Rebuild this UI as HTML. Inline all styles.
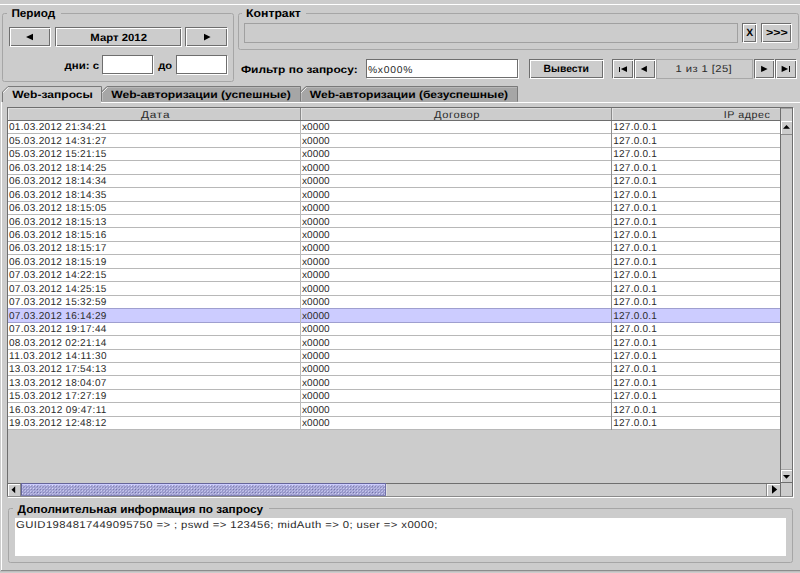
<!DOCTYPE html>
<html><head><meta charset="utf-8"><style>
html,body{margin:0;padding:0;background:#cccccc}
body{width:800px;height:573px;overflow:hidden;position:relative}
svg{position:absolute;left:0;top:0;font-family:"Liberation Sans",sans-serif}
text{text-rendering:geometricPrecision}
</style></head><body>
<svg width="800" height="573" viewBox="0 0 800 573" shape-rendering="crispEdges">
<rect width="800" height="573" fill="#cccccc"/>
<rect x="0" y="4" width="800" height="1" fill="#ffffff"/>
<rect x="2.5" y="13.5" width="231" height="68" rx="2" fill="none" stroke="#a6a6a6" stroke-width="1" shape-rendering="geometricPrecision"/>
<rect x="7" y="11" width="54" height="5" fill="#cccccc"/>
<rect x="9" y="27" width="41" height="1" fill="#6e6e6e"/>
<rect x="9" y="45" width="41" height="1" fill="#6e6e6e"/>
<rect x="9" y="27" width="1" height="19" fill="#6e6e6e"/>
<rect x="49" y="27" width="1" height="19" fill="#6e6e6e"/>
<rect x="10" y="28" width="41" height="1" fill="#ffffff"/>
<rect x="10" y="46" width="41" height="1" fill="#ffffff"/>
<rect x="10" y="28" width="1" height="19" fill="#ffffff"/>
<rect x="50" y="28" width="1" height="19" fill="#ffffff"/>
<rect x="55" y="27" width="126" height="1" fill="#6e6e6e"/>
<rect x="55" y="45" width="126" height="1" fill="#6e6e6e"/>
<rect x="55" y="27" width="1" height="19" fill="#6e6e6e"/>
<rect x="180" y="27" width="1" height="19" fill="#6e6e6e"/>
<rect x="56" y="28" width="126" height="1" fill="#ffffff"/>
<rect x="56" y="46" width="126" height="1" fill="#ffffff"/>
<rect x="56" y="28" width="1" height="19" fill="#ffffff"/>
<rect x="181" y="28" width="1" height="19" fill="#ffffff"/>
<rect x="185" y="27" width="42" height="1" fill="#6e6e6e"/>
<rect x="185" y="45" width="42" height="1" fill="#6e6e6e"/>
<rect x="185" y="27" width="1" height="19" fill="#6e6e6e"/>
<rect x="226" y="27" width="1" height="19" fill="#6e6e6e"/>
<rect x="186" y="28" width="42" height="1" fill="#ffffff"/>
<rect x="186" y="46" width="42" height="1" fill="#ffffff"/>
<rect x="186" y="28" width="1" height="19" fill="#ffffff"/>
<rect x="227" y="28" width="1" height="19" fill="#ffffff"/>
<polygon points="26,37 33,33.8 33,40.2" fill="#000" shape-rendering="geometricPrecision" />
<polygon points="204,33.8 204,40.4 210.6,37.1" fill="#000" shape-rendering="geometricPrecision" />
<rect x="102" y="55" width="51" height="19" fill="#ffffff"/>
<rect x="102" y="55" width="51" height="1" fill="#6e6e6e"/>
<rect x="102" y="73" width="51" height="1" fill="#6e6e6e"/>
<rect x="102" y="55" width="1" height="19" fill="#6e6e6e"/>
<rect x="152" y="55" width="1" height="19" fill="#6e6e6e"/>
<rect x="103" y="74" width="51" height="1" fill="#ffffff"/>
<rect x="153" y="56" width="1" height="19" fill="#ffffff"/>
<rect x="176" y="55" width="51" height="19" fill="#ffffff"/>
<rect x="176" y="55" width="51" height="1" fill="#6e6e6e"/>
<rect x="176" y="73" width="51" height="1" fill="#6e6e6e"/>
<rect x="176" y="55" width="1" height="19" fill="#6e6e6e"/>
<rect x="226" y="55" width="1" height="19" fill="#6e6e6e"/>
<rect x="177" y="74" width="51" height="1" fill="#ffffff"/>
<rect x="227" y="56" width="1" height="19" fill="#ffffff"/>
<rect x="238.5" y="13.5" width="560" height="36" rx="2" fill="none" stroke="#a6a6a6" stroke-width="1" shape-rendering="geometricPrecision"/>
<rect x="242" y="11" width="64" height="5" fill="#cccccc"/>
<rect x="244" y="23" width="494" height="20" fill="none"/>
<rect x="244.5" y="23.5" width="493" height="19" fill="none" stroke="#a0a0a0"/>
<rect x="742" y="23" width="14" height="1" fill="#6e6e6e"/>
<rect x="742" y="41" width="14" height="1" fill="#6e6e6e"/>
<rect x="742" y="23" width="1" height="19" fill="#6e6e6e"/>
<rect x="755" y="23" width="1" height="19" fill="#6e6e6e"/>
<rect x="743" y="24" width="14" height="1" fill="#ffffff"/>
<rect x="743" y="42" width="14" height="1" fill="#ffffff"/>
<rect x="743" y="24" width="1" height="19" fill="#ffffff"/>
<rect x="756" y="24" width="1" height="19" fill="#ffffff"/>
<rect x="761" y="23" width="30" height="1" fill="#6e6e6e"/>
<rect x="761" y="41" width="30" height="1" fill="#6e6e6e"/>
<rect x="761" y="23" width="1" height="19" fill="#6e6e6e"/>
<rect x="790" y="23" width="1" height="19" fill="#6e6e6e"/>
<rect x="762" y="24" width="30" height="1" fill="#ffffff"/>
<rect x="762" y="42" width="30" height="1" fill="#ffffff"/>
<rect x="762" y="24" width="1" height="19" fill="#ffffff"/>
<rect x="791" y="24" width="1" height="19" fill="#ffffff"/>
<rect x="366" y="59" width="152" height="19" fill="#ffffff"/>
<rect x="366" y="59" width="152" height="1" fill="#6e6e6e"/>
<rect x="366" y="77" width="152" height="1" fill="#6e6e6e"/>
<rect x="366" y="59" width="1" height="19" fill="#6e6e6e"/>
<rect x="517" y="59" width="1" height="19" fill="#6e6e6e"/>
<rect x="367" y="78" width="152" height="1" fill="#ffffff"/>
<rect x="518" y="60" width="1" height="19" fill="#ffffff"/>
<rect x="529" y="59" width="74" height="1" fill="#6e6e6e"/>
<rect x="529" y="77" width="74" height="1" fill="#6e6e6e"/>
<rect x="529" y="59" width="1" height="19" fill="#6e6e6e"/>
<rect x="602" y="59" width="1" height="19" fill="#6e6e6e"/>
<rect x="530" y="60" width="74" height="1" fill="#ffffff"/>
<rect x="530" y="78" width="74" height="1" fill="#ffffff"/>
<rect x="530" y="60" width="1" height="19" fill="#ffffff"/>
<rect x="603" y="60" width="1" height="19" fill="#ffffff"/>
<rect x="612" y="59" width="21" height="1" fill="#6e6e6e"/>
<rect x="612" y="77" width="21" height="1" fill="#6e6e6e"/>
<rect x="612" y="59" width="1" height="19" fill="#6e6e6e"/>
<rect x="632" y="59" width="1" height="19" fill="#6e6e6e"/>
<rect x="613" y="60" width="21" height="1" fill="#ffffff"/>
<rect x="613" y="78" width="21" height="1" fill="#ffffff"/>
<rect x="613" y="60" width="1" height="19" fill="#ffffff"/>
<rect x="633" y="60" width="1" height="19" fill="#ffffff"/>
<rect x="634" y="59" width="21" height="1" fill="#6e6e6e"/>
<rect x="634" y="77" width="21" height="1" fill="#6e6e6e"/>
<rect x="634" y="59" width="1" height="19" fill="#6e6e6e"/>
<rect x="654" y="59" width="1" height="19" fill="#6e6e6e"/>
<rect x="635" y="60" width="21" height="1" fill="#ffffff"/>
<rect x="635" y="78" width="21" height="1" fill="#ffffff"/>
<rect x="635" y="60" width="1" height="19" fill="#ffffff"/>
<rect x="655" y="60" width="1" height="19" fill="#ffffff"/>
<rect x="754" y="59" width="20" height="1" fill="#6e6e6e"/>
<rect x="754" y="77" width="20" height="1" fill="#6e6e6e"/>
<rect x="754" y="59" width="1" height="19" fill="#6e6e6e"/>
<rect x="773" y="59" width="1" height="19" fill="#6e6e6e"/>
<rect x="755" y="60" width="20" height="1" fill="#ffffff"/>
<rect x="755" y="78" width="20" height="1" fill="#ffffff"/>
<rect x="755" y="60" width="1" height="19" fill="#ffffff"/>
<rect x="774" y="60" width="1" height="19" fill="#ffffff"/>
<rect x="775" y="59" width="21" height="1" fill="#6e6e6e"/>
<rect x="775" y="77" width="21" height="1" fill="#6e6e6e"/>
<rect x="775" y="59" width="1" height="19" fill="#6e6e6e"/>
<rect x="795" y="59" width="1" height="19" fill="#6e6e6e"/>
<rect x="776" y="60" width="21" height="1" fill="#ffffff"/>
<rect x="776" y="78" width="21" height="1" fill="#ffffff"/>
<rect x="776" y="60" width="1" height="19" fill="#ffffff"/>
<rect x="796" y="60" width="1" height="19" fill="#ffffff"/>
<rect x="656.5" y="59.5" width="96" height="19" fill="none" stroke="#a8a8a8"/>
<rect x="618.8" y="66.5" width="1.3" height="5.2" fill="#000"/>
<polygon points="620.8,69.1 627,66.3 627,71.9" fill="#000" shape-rendering="geometricPrecision" />
<polygon points="640.8,68.9 646.9,65.8 646.9,72.0" fill="#000" shape-rendering="geometricPrecision" />
<polygon points="761.1,65.8 761.1,72.1 767.6,68.95" fill="#000" shape-rendering="geometricPrecision" />
<polygon points="781.6,65.8 781.6,72.1 788.1,68.95" fill="#000" shape-rendering="geometricPrecision" />
<rect x="788.7" y="65.8" width="1.4" height="6.3" fill="#000"/>
<rect x="101" y="102" width="699" height="1" fill="#ffffff"/>
<rect x="1" y="102" width="1" height="468" fill="#ffffff"/>
<rect x="1" y="570" width="799" height="1" fill="#8c8c8c"/>
<rect x="0" y="571" width="800" height="1" fill="#bdbdbd"/>
<polygon points="300,102 300,92 306,86 518,86 518,102" fill="#a6a6a6" shape-rendering="geometricPrecision" />
<polyline points="300.5,101.5 300.5,92 306,86.5 517.5,86.5 517.5,101.5" fill="none" stroke="#7a7a7a" stroke-width="1" shape-rendering="geometricPrecision"/>
<polyline points="301.5,93 301.5,92.5 306.5,87.5" fill="none" stroke="#ffffff" stroke-opacity="0.8" stroke-width="1" shape-rendering="geometricPrecision"/>
<rect x="301" y="92" width="1" height="9" fill="#ffffff" fill-opacity="0.25"/>
<rect x="306" y="87" width="211" height="1" fill="#ffffff" fill-opacity="0.2"/>
<polygon points="101,102 101,92 107,86 301,86 301,102" fill="#a6a6a6" shape-rendering="geometricPrecision" />
<polyline points="101.5,101.5 101.5,92 107,86.5 300.5,86.5 300.5,101.5" fill="none" stroke="#7a7a7a" stroke-width="1" shape-rendering="geometricPrecision"/>
<polyline points="102.5,93 102.5,92.5 107.5,87.5" fill="none" stroke="#ffffff" stroke-opacity="0.8" stroke-width="1" shape-rendering="geometricPrecision"/>
<rect x="102" y="92" width="1" height="9" fill="#ffffff" fill-opacity="0.25"/>
<rect x="107" y="87" width="193" height="1" fill="#ffffff" fill-opacity="0.2"/>
<polygon points="2,102 2,92 8,86 102,86 102,102" fill="#cccccc" shape-rendering="geometricPrecision" />
<polyline points="2.5,102 2.5,92 8,86.5 101.5,86.5 101.5,101.5" fill="none" stroke="#7a7a7a" stroke-width="1" shape-rendering="geometricPrecision"/>
<polyline points="3.5,93 3.5,92.5 8.5,87.5" fill="none" stroke="#ffffff" stroke-opacity="0.8" stroke-width="1" shape-rendering="geometricPrecision"/>
<rect x="3" y="101" width="98" height="3" fill="#cccccc"/>
<rect x="8" y="108" width="784" height="388" fill="#cccccc"/>
<rect x="7" y="107" width="786" height="1" fill="#6e6e6e"/>
<rect x="7" y="107" width="1" height="390" fill="#6e6e6e"/>
<rect x="792" y="107" width="1" height="390" fill="#6e6e6e"/>
<rect x="7" y="496" width="786" height="1" fill="#8a8a8a"/>
<rect x="8" y="497" width="786" height="1" fill="#ffffff"/>
<rect x="793" y="108" width="1" height="390" fill="#ffffff"/>
<rect x="8" y="108" width="772" height="1" fill="#dcdcdc"/>
<rect x="8" y="109" width="1" height="11" fill="#eeeeee"/>
<rect x="781" y="108" width="11" height="1" fill="#a0a0a0"/>
<rect x="8" y="120" width="773" height="1" fill="#6e6e6e"/>
<rect x="300" y="108" width="1" height="12" fill="#8a8a8a"/>
<rect x="301" y="108" width="1" height="12" fill="#e4e4e4"/>
<rect x="611" y="108" width="1" height="12" fill="#8a8a8a"/>
<rect x="612" y="108" width="1" height="12" fill="#e4e4e4"/>
<rect x="8" y="121" width="772" height="309" fill="#ffffff"/>
<rect x="8" y="133" width="772" height="1" fill="#b8b8b8"/>
<rect x="8" y="147" width="772" height="1" fill="#b8b8b8"/>
<rect x="8" y="160" width="772" height="1" fill="#b8b8b8"/>
<rect x="8" y="174" width="772" height="1" fill="#b8b8b8"/>
<rect x="8" y="187" width="772" height="1" fill="#b8b8b8"/>
<rect x="8" y="201" width="772" height="1" fill="#b8b8b8"/>
<rect x="8" y="214" width="772" height="1" fill="#b8b8b8"/>
<rect x="8" y="227" width="772" height="1" fill="#b8b8b8"/>
<rect x="8" y="241" width="772" height="1" fill="#b8b8b8"/>
<rect x="8" y="254" width="772" height="1" fill="#b8b8b8"/>
<rect x="8" y="268" width="772" height="1" fill="#b8b8b8"/>
<rect x="8" y="281" width="772" height="1" fill="#b8b8b8"/>
<rect x="8" y="295" width="772" height="1" fill="#b8b8b8"/>
<rect x="8" y="308" width="772" height="1" fill="#b8b8b8"/>
<rect x="8" y="322" width="772" height="1" fill="#b8b8b8"/>
<rect x="8" y="335" width="772" height="1" fill="#b8b8b8"/>
<rect x="8" y="349" width="772" height="1" fill="#b8b8b8"/>
<rect x="8" y="362" width="772" height="1" fill="#b8b8b8"/>
<rect x="8" y="375" width="772" height="1" fill="#b8b8b8"/>
<rect x="8" y="389" width="772" height="1" fill="#b8b8b8"/>
<rect x="8" y="402" width="772" height="1" fill="#b8b8b8"/>
<rect x="8" y="416" width="772" height="1" fill="#b8b8b8"/>
<rect x="8" y="429" width="772" height="1" fill="#b8b8b8"/>
<rect x="8" y="308" width="772" height="15" fill="#ccccff"/>
<rect x="8" y="308" width="772" height="1" fill="#9f9fcf"/>
<rect x="8" y="322" width="772" height="1" fill="#9f9fcf"/>
<rect x="300" y="121" width="1" height="309" fill="#bcbcbc"/>
<rect x="611" y="121" width="1" height="309" fill="#909090"/>
<rect x="780" y="108" width="1" height="389" fill="#6e6e6e"/>
<rect x="781" y="121" width="11" height="362" fill="#cccccc"/>
<rect x="781" y="121" width="11" height="1" fill="#ffffff"/>
<rect x="781" y="121" width="1" height="13" fill="#ffffff"/>
<rect x="781" y="134" width="11" height="1" fill="#8a8a8a"/>
<polygon points="783,128.8 790,128.8 786.5,125" fill="#000" shape-rendering="geometricPrecision" />
<rect x="781" y="469" width="11" height="1" fill="#a8a8a8"/>
<rect x="781" y="470" width="11" height="1" fill="#ffffff"/>
<rect x="781" y="470" width="1" height="12" fill="#ffffff"/>
<rect x="780" y="482" width="13" height="1" fill="#6e6e6e"/>
<polygon points="783,475 790,475 786.5,478.8" fill="#000" shape-rendering="geometricPrecision" />
<rect x="8" y="483" width="772" height="13" fill="#cccccc"/>
<rect x="8" y="483" width="772" height="1" fill="#6e6e6e"/>
<rect x="8" y="484" width="13" height="1" fill="#ffffff"/>
<rect x="8" y="484" width="1" height="12" fill="#ffffff"/>
<rect x="20" y="484" width="1" height="12" fill="#8a8a8a"/>
<polygon points="11.5,489.7 15.2,486.2 15.2,493.2" fill="#000" shape-rendering="geometricPrecision" />
<rect x="767" y="484" width="13" height="1" fill="#ffffff"/>
<rect x="767" y="484" width="1" height="12" fill="#ffffff"/>
<rect x="766" y="484" width="1" height="12" fill="#8a8a8a"/>
<polygon points="777.2,489.5 772,485.3 772,493.7" fill="#000" shape-rendering="geometricPrecision" />
<rect x="386" y="484" width="1" height="12" fill="#e0e0e0"/>
<rect x="781" y="483" width="11" height="13" fill="#cccccc"/>
<defs><pattern id="bump" x="0" y="0" width="3.16" height="3.16" patternUnits="userSpaceOnUse"><rect width="3.16" height="3.16" fill="#a6a6d8"/><rect x="0" y="0" width="0.79" height="0.79" fill="#e6e6ff"/><rect x="1.58" y="1.58" width="0.79" height="0.79" fill="#e6e6ff"/><rect x="0.79" y="0.79" width="0.79" height="0.79" fill="#6a6a9c"/><rect x="2.37" y="2.37" width="0.79" height="0.79" fill="#6a6a9c"/></pattern></defs>
<rect x="21" y="483" width="365" height="13" fill="url(#bump)" shape-rendering="geometricPrecision"/>
<rect x="21" y="483" width="365" height="1" fill="#66669a"/>
<rect x="22" y="484" width="363" height="1" fill="#ccccff"/>
<rect x="21" y="483" width="1" height="13" fill="#66669a"/>
<rect x="385" y="483" width="1" height="13" fill="#7070a8"/>
<rect x="21" y="495" width="365" height="1" fill="#8080b4"/>
<rect x="8.5" y="508.5" width="784" height="54" rx="2" fill="none" stroke="#a6a6a6" stroke-width="1" shape-rendering="geometricPrecision"/>
<rect x="13" y="506" width="256" height="5" fill="#cccccc"/>
<rect x="15" y="518" width="771" height="38" fill="#ffffff"/>
<text transform="translate(11.40,16.80) scale(1.0303,1)" font-size="11.4" font-weight="bold" textLength="42.52" lengthAdjust="spacing" fill="#000">Период</text>
<text transform="translate(90.30,40.50) scale(1.0925,1)" font-size="10.4" font-weight="bold" textLength="51.86" lengthAdjust="spacing" fill="#000">Март 2012</text>
<text transform="translate(64.50,69.00) scale(1.1010,1)" font-size="10.4" font-weight="bold" textLength="31.38" lengthAdjust="spacing" fill="#000">дни: с</text>
<text transform="translate(158.20,69.00) scale(1.0718,1)" font-size="10.4" font-weight="bold" textLength="12.94" lengthAdjust="spacing" fill="#000">до</text>
<text transform="translate(246.10,16.80) scale(1.0728,1)" font-size="11.4" font-weight="bold" textLength="50.94" lengthAdjust="spacing" fill="#000">Контракт</text>
<text transform="translate(746.20,36.00) scale(1.0000,1)" font-size="10.4" font-weight="bold" textLength="6.93" lengthAdjust="spacing" fill="#000">X</text>
<text transform="translate(765.90,36.00) scale(1.2020,1)" font-size="10.4" font-weight="bold" textLength="18.20" lengthAdjust="spacing" fill="#000">&gt;&gt;&gt;</text>
<text transform="translate(240.90,73.00) scale(1.1480,1)" font-size="10.4" font-weight="bold" textLength="101.68" lengthAdjust="spacing" fill="#000">Фильтр по запросу:</text>
<text transform="translate(543.60,72.00) scale(0.9970,1)" font-size="10.4" font-weight="bold" textLength="45.52" lengthAdjust="spacing" fill="#000">Вывести</text>
<text transform="translate(12.20,98.00) scale(1.1605,1)" font-size="10.4" font-weight="bold" textLength="69.50" lengthAdjust="spacing" fill="#000">Web-запросы</text>
<text transform="translate(111.20,98.00) scale(1.1666,1)" font-size="10.4" font-weight="bold" textLength="153.99" lengthAdjust="spacing" fill="#000">Web-авторизации (успешные)</text>
<text transform="translate(309.80,98.00) scale(1.1592,1)" font-size="10.4" font-weight="bold" textLength="171.09" lengthAdjust="spacing" fill="#000">Web-авторизации (безуспешные)</text>
<text transform="translate(17.60,512.80) scale(1.0352,1)" font-size="11.4" font-weight="bold" textLength="237.12" lengthAdjust="spacing" fill="#000">Дополнительная информация по запросу</text>
<text transform="translate(367.90,72.80) scale(1.0293,1)" font-size="10.0" textLength="43.16" lengthAdjust="spacing" fill="#2a2a2a">%x000%</text>
<text transform="translate(675.60,72.00) scale(1.1235,1)" font-size="10.0" textLength="49.95" lengthAdjust="spacing" fill="#2a2a2a">1 из 1 [25]</text>
<text transform="translate(140.90,118.30) scale(1.1800,1)" font-size="10.0" textLength="24.24" lengthAdjust="spacing" fill="#2a2a2a">Дата</text>
<text transform="translate(434.00,118.30) scale(1.1112,1)" font-size="10.0" textLength="40.97" lengthAdjust="spacing" fill="#2a2a2a">Договор</text>
<text transform="translate(723.75,118.30) scale(1.0685,1)" font-size="10.0" textLength="43.15" lengthAdjust="spacing" fill="#2a2a2a">IP адрес</text>
<text transform="translate(16.00,528.00) scale(1.1295,1)" font-size="10.0" textLength="372.99" lengthAdjust="spacing" fill="#2a2a2a">GUID1984817449095750 =&gt; ; pswd =&gt; 123456; midAuth =&gt; 0; user =&gt; x0000;</text>
<text transform="translate(9.00,130.35) scale(1.0000,1)" font-size="10.0" textLength="97.36" lengthAdjust="spacing" fill="#2a2a2a">01.03.2012 21:34:21</text>
<text transform="translate(301.90,130.35) scale(1.0000,1)" font-size="10.0" textLength="27.77" lengthAdjust="spacing" fill="#2a2a2a">x0000</text>
<text transform="translate(613.25,130.35) scale(1.0000,1)" font-size="10.0" textLength="43.62" lengthAdjust="spacing" fill="#2a2a2a">127.0.0.1</text>
<text transform="translate(9.00,143.80) scale(1.0000,1)" font-size="10.0" textLength="97.36" lengthAdjust="spacing" fill="#2a2a2a">05.03.2012 14:31:27</text>
<text transform="translate(301.90,143.80) scale(1.0000,1)" font-size="10.0" textLength="27.77" lengthAdjust="spacing" fill="#2a2a2a">x0000</text>
<text transform="translate(613.25,143.80) scale(1.0000,1)" font-size="10.0" textLength="43.62" lengthAdjust="spacing" fill="#2a2a2a">127.0.0.1</text>
<text transform="translate(9.00,157.25) scale(1.0000,1)" font-size="10.0" textLength="97.36" lengthAdjust="spacing" fill="#2a2a2a">05.03.2012 15:21:15</text>
<text transform="translate(301.90,157.25) scale(1.0000,1)" font-size="10.0" textLength="27.77" lengthAdjust="spacing" fill="#2a2a2a">x0000</text>
<text transform="translate(613.25,157.25) scale(1.0000,1)" font-size="10.0" textLength="43.62" lengthAdjust="spacing" fill="#2a2a2a">127.0.0.1</text>
<text transform="translate(9.00,170.70) scale(1.0000,1)" font-size="10.0" textLength="97.36" lengthAdjust="spacing" fill="#2a2a2a">06.03.2012 18:14:25</text>
<text transform="translate(301.90,170.70) scale(1.0000,1)" font-size="10.0" textLength="27.77" lengthAdjust="spacing" fill="#2a2a2a">x0000</text>
<text transform="translate(613.25,170.70) scale(1.0000,1)" font-size="10.0" textLength="43.62" lengthAdjust="spacing" fill="#2a2a2a">127.0.0.1</text>
<text transform="translate(9.00,184.15) scale(1.0000,1)" font-size="10.0" textLength="97.36" lengthAdjust="spacing" fill="#2a2a2a">06.03.2012 18:14:34</text>
<text transform="translate(301.90,184.15) scale(1.0000,1)" font-size="10.0" textLength="27.77" lengthAdjust="spacing" fill="#2a2a2a">x0000</text>
<text transform="translate(613.25,184.15) scale(1.0000,1)" font-size="10.0" textLength="43.62" lengthAdjust="spacing" fill="#2a2a2a">127.0.0.1</text>
<text transform="translate(9.00,197.60) scale(1.0000,1)" font-size="10.0" textLength="97.36" lengthAdjust="spacing" fill="#2a2a2a">06.03.2012 18:14:35</text>
<text transform="translate(301.90,197.60) scale(1.0000,1)" font-size="10.0" textLength="27.77" lengthAdjust="spacing" fill="#2a2a2a">x0000</text>
<text transform="translate(613.25,197.60) scale(1.0000,1)" font-size="10.0" textLength="43.62" lengthAdjust="spacing" fill="#2a2a2a">127.0.0.1</text>
<text transform="translate(9.00,211.05) scale(1.0000,1)" font-size="10.0" textLength="97.36" lengthAdjust="spacing" fill="#2a2a2a">06.03.2012 18:15:05</text>
<text transform="translate(301.90,211.05) scale(1.0000,1)" font-size="10.0" textLength="27.77" lengthAdjust="spacing" fill="#2a2a2a">x0000</text>
<text transform="translate(613.25,211.05) scale(1.0000,1)" font-size="10.0" textLength="43.62" lengthAdjust="spacing" fill="#2a2a2a">127.0.0.1</text>
<text transform="translate(9.00,224.50) scale(1.0000,1)" font-size="10.0" textLength="97.36" lengthAdjust="spacing" fill="#2a2a2a">06.03.2012 18:15:13</text>
<text transform="translate(301.90,224.50) scale(1.0000,1)" font-size="10.0" textLength="27.77" lengthAdjust="spacing" fill="#2a2a2a">x0000</text>
<text transform="translate(613.25,224.50) scale(1.0000,1)" font-size="10.0" textLength="43.62" lengthAdjust="spacing" fill="#2a2a2a">127.0.0.1</text>
<text transform="translate(9.00,237.95) scale(1.0000,1)" font-size="10.0" textLength="97.36" lengthAdjust="spacing" fill="#2a2a2a">06.03.2012 18:15:16</text>
<text transform="translate(301.90,237.95) scale(1.0000,1)" font-size="10.0" textLength="27.77" lengthAdjust="spacing" fill="#2a2a2a">x0000</text>
<text transform="translate(613.25,237.95) scale(1.0000,1)" font-size="10.0" textLength="43.62" lengthAdjust="spacing" fill="#2a2a2a">127.0.0.1</text>
<text transform="translate(9.00,251.40) scale(1.0000,1)" font-size="10.0" textLength="97.36" lengthAdjust="spacing" fill="#2a2a2a">06.03.2012 18:15:17</text>
<text transform="translate(301.90,251.40) scale(1.0000,1)" font-size="10.0" textLength="27.77" lengthAdjust="spacing" fill="#2a2a2a">x0000</text>
<text transform="translate(613.25,251.40) scale(1.0000,1)" font-size="10.0" textLength="43.62" lengthAdjust="spacing" fill="#2a2a2a">127.0.0.1</text>
<text transform="translate(9.00,264.85) scale(1.0000,1)" font-size="10.0" textLength="97.36" lengthAdjust="spacing" fill="#2a2a2a">06.03.2012 18:15:19</text>
<text transform="translate(301.90,264.85) scale(1.0000,1)" font-size="10.0" textLength="27.77" lengthAdjust="spacing" fill="#2a2a2a">x0000</text>
<text transform="translate(613.25,264.85) scale(1.0000,1)" font-size="10.0" textLength="43.62" lengthAdjust="spacing" fill="#2a2a2a">127.0.0.1</text>
<text transform="translate(9.00,278.30) scale(1.0000,1)" font-size="10.0" textLength="97.36" lengthAdjust="spacing" fill="#2a2a2a">07.03.2012 14:22:15</text>
<text transform="translate(301.90,278.30) scale(1.0000,1)" font-size="10.0" textLength="27.77" lengthAdjust="spacing" fill="#2a2a2a">x0000</text>
<text transform="translate(613.25,278.30) scale(1.0000,1)" font-size="10.0" textLength="43.62" lengthAdjust="spacing" fill="#2a2a2a">127.0.0.1</text>
<text transform="translate(9.00,291.75) scale(1.0000,1)" font-size="10.0" textLength="97.36" lengthAdjust="spacing" fill="#2a2a2a">07.03.2012 14:25:15</text>
<text transform="translate(301.90,291.75) scale(1.0000,1)" font-size="10.0" textLength="27.77" lengthAdjust="spacing" fill="#2a2a2a">x0000</text>
<text transform="translate(613.25,291.75) scale(1.0000,1)" font-size="10.0" textLength="43.62" lengthAdjust="spacing" fill="#2a2a2a">127.0.0.1</text>
<text transform="translate(9.00,305.20) scale(1.0000,1)" font-size="10.0" textLength="97.36" lengthAdjust="spacing" fill="#2a2a2a">07.03.2012 15:32:59</text>
<text transform="translate(301.90,305.20) scale(1.0000,1)" font-size="10.0" textLength="27.77" lengthAdjust="spacing" fill="#2a2a2a">x0000</text>
<text transform="translate(613.25,305.20) scale(1.0000,1)" font-size="10.0" textLength="43.62" lengthAdjust="spacing" fill="#2a2a2a">127.0.0.1</text>
<text transform="translate(9.00,318.65) scale(1.0000,1)" font-size="10.0" textLength="97.36" lengthAdjust="spacing" fill="#2a2a2a">07.03.2012 16:14:29</text>
<text transform="translate(301.90,318.65) scale(1.0000,1)" font-size="10.0" textLength="27.77" lengthAdjust="spacing" fill="#2a2a2a">x0000</text>
<text transform="translate(613.25,318.65) scale(1.0000,1)" font-size="10.0" textLength="43.62" lengthAdjust="spacing" fill="#2a2a2a">127.0.0.1</text>
<text transform="translate(9.00,332.10) scale(1.0000,1)" font-size="10.0" textLength="97.36" lengthAdjust="spacing" fill="#2a2a2a">07.03.2012 19:17:44</text>
<text transform="translate(301.90,332.10) scale(1.0000,1)" font-size="10.0" textLength="27.77" lengthAdjust="spacing" fill="#2a2a2a">x0000</text>
<text transform="translate(613.25,332.10) scale(1.0000,1)" font-size="10.0" textLength="43.62" lengthAdjust="spacing" fill="#2a2a2a">127.0.0.1</text>
<text transform="translate(9.00,345.55) scale(1.0000,1)" font-size="10.0" textLength="97.36" lengthAdjust="spacing" fill="#2a2a2a">08.03.2012 02:21:14</text>
<text transform="translate(301.90,345.55) scale(1.0000,1)" font-size="10.0" textLength="27.77" lengthAdjust="spacing" fill="#2a2a2a">x0000</text>
<text transform="translate(613.25,345.55) scale(1.0000,1)" font-size="10.0" textLength="43.62" lengthAdjust="spacing" fill="#2a2a2a">127.0.0.1</text>
<text transform="translate(9.00,359.00) scale(1.0000,1)" font-size="10.0" textLength="97.44" lengthAdjust="spacing" fill="#2a2a2a">11.03.2012 14:11:30</text>
<text transform="translate(301.90,359.00) scale(1.0000,1)" font-size="10.0" textLength="27.77" lengthAdjust="spacing" fill="#2a2a2a">x0000</text>
<text transform="translate(613.25,359.00) scale(1.0000,1)" font-size="10.0" textLength="43.62" lengthAdjust="spacing" fill="#2a2a2a">127.0.0.1</text>
<text transform="translate(9.00,372.45) scale(1.0000,1)" font-size="10.0" textLength="97.36" lengthAdjust="spacing" fill="#2a2a2a">13.03.2012 17:54:13</text>
<text transform="translate(301.90,372.45) scale(1.0000,1)" font-size="10.0" textLength="27.77" lengthAdjust="spacing" fill="#2a2a2a">x0000</text>
<text transform="translate(613.25,372.45) scale(1.0000,1)" font-size="10.0" textLength="43.62" lengthAdjust="spacing" fill="#2a2a2a">127.0.0.1</text>
<text transform="translate(9.00,385.90) scale(1.0000,1)" font-size="10.0" textLength="97.36" lengthAdjust="spacing" fill="#2a2a2a">13.03.2012 18:04:07</text>
<text transform="translate(301.90,385.90) scale(1.0000,1)" font-size="10.0" textLength="27.77" lengthAdjust="spacing" fill="#2a2a2a">x0000</text>
<text transform="translate(613.25,385.90) scale(1.0000,1)" font-size="10.0" textLength="43.62" lengthAdjust="spacing" fill="#2a2a2a">127.0.0.1</text>
<text transform="translate(9.00,399.35) scale(1.0000,1)" font-size="10.0" textLength="97.36" lengthAdjust="spacing" fill="#2a2a2a">15.03.2012 17:27:19</text>
<text transform="translate(301.90,399.35) scale(1.0000,1)" font-size="10.0" textLength="27.77" lengthAdjust="spacing" fill="#2a2a2a">x0000</text>
<text transform="translate(613.25,399.35) scale(1.0000,1)" font-size="10.0" textLength="43.62" lengthAdjust="spacing" fill="#2a2a2a">127.0.0.1</text>
<text transform="translate(9.00,412.80) scale(1.0000,1)" font-size="10.0" textLength="97.40" lengthAdjust="spacing" fill="#2a2a2a">16.03.2012 09:47:11</text>
<text transform="translate(301.90,412.80) scale(1.0000,1)" font-size="10.0" textLength="27.77" lengthAdjust="spacing" fill="#2a2a2a">x0000</text>
<text transform="translate(613.25,412.80) scale(1.0000,1)" font-size="10.0" textLength="43.62" lengthAdjust="spacing" fill="#2a2a2a">127.0.0.1</text>
<text transform="translate(9.00,426.25) scale(1.0000,1)" font-size="10.0" textLength="97.36" lengthAdjust="spacing" fill="#2a2a2a">19.03.2012 12:48:12</text>
<text transform="translate(301.90,426.25) scale(1.0000,1)" font-size="10.0" textLength="27.77" lengthAdjust="spacing" fill="#2a2a2a">x0000</text>
<text transform="translate(613.25,426.25) scale(1.0000,1)" font-size="10.0" textLength="43.62" lengthAdjust="spacing" fill="#2a2a2a">127.0.0.1</text>
</svg>
</body></html>
